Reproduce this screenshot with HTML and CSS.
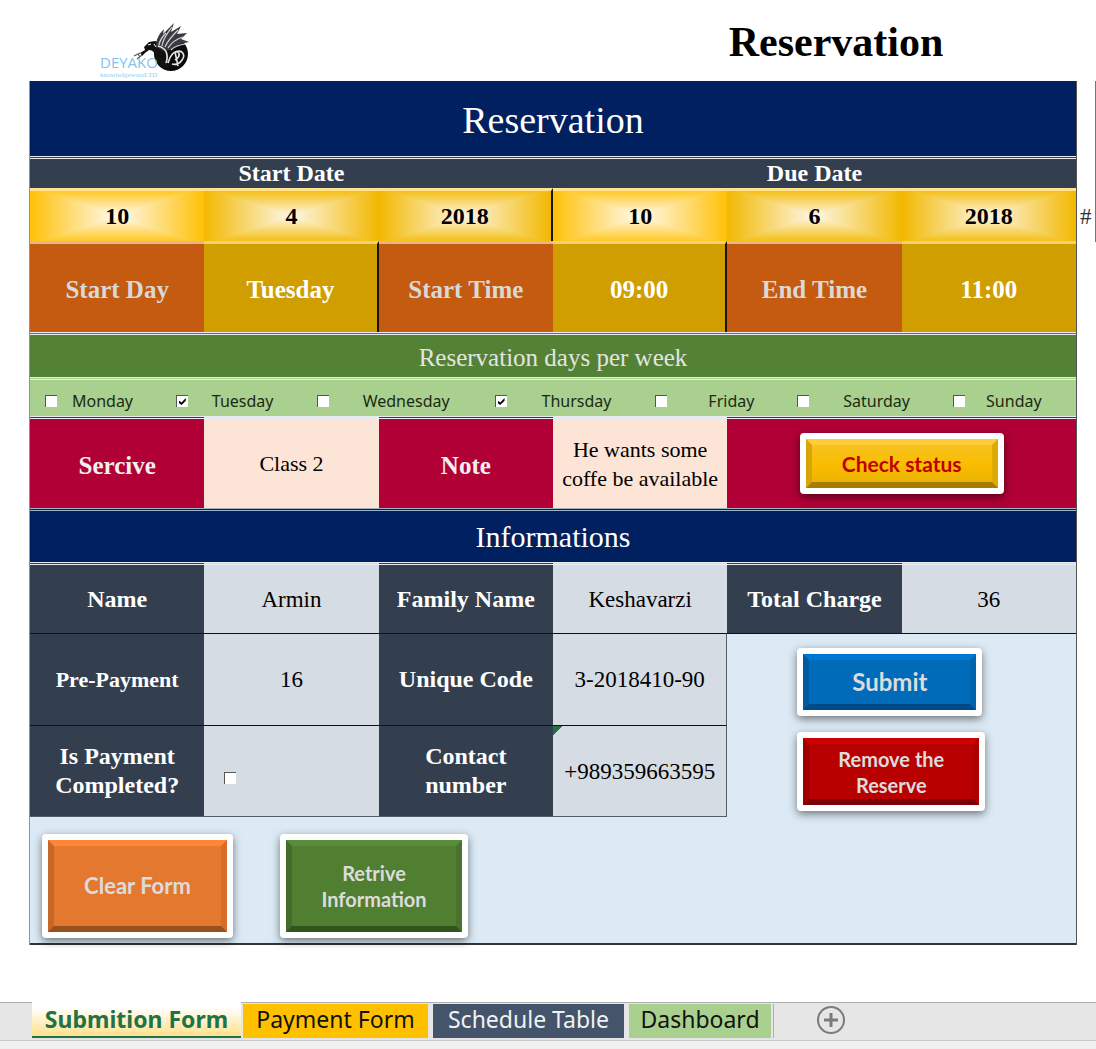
FILE: index.html
```html
<!DOCTYPE html>
<html lang="en">
<head>
<meta charset="utf-8">
<meta name="viewport" content="width=device-width, initial-scale=1">
<title>Reservation</title>
<link rel="stylesheet" href="styles.css">
</head>
<body>
<header class="top">
  <svg class="logo" viewBox="0 0 96 60" role="img" aria-label="Deyako knowledgeware LTD">
    <circle cx="73" cy="34" r="17" fill="#0b0b0d"/>
    <path fill="#111" d="M42 33l5-3-1-3 5-5 6-1 7 2 6 7 3 9-3 9c-7 1-12-4-13-11 0-4-2-7-6-7l-4 3-3 3-1-2z"/>
    <path fill="#3a3a40" d="M58 27c0-8 3-13 8-18l-1 5 11-11-3 9 10-6-4 8 10-1-6 6 8 3-9 2-9 6-7 1z"/>
    <path fill="none" stroke="#d4d4d8" stroke-width="1.2" d="M61 25c1-6 4-9 7-12M64 26c1-8 5-12 10-19M67 27c3-7 7-11 13-17M70 28c4-6 8-9 15-11M73 30c4-4 8-5 14-6"/>
    <path fill="none" stroke="#e6e6e8" stroke-width="1.6" d="M60 26c8 2 11 8 8 17M70 43c2-8 7-13 10-11 3 3 0 6-3 8M78 32c6-3 10 3 6 8-2 3-6 5-10 4M77 32l3 14"/>
    <path fill="none" stroke="#fff" stroke-width="1" d="M50 25l3-1M56 24l2 3"/>
    <path fill="none" stroke="#555" stroke-width="1.2" d="M36 36l6-3M39 39l5-4M40 34l2 3"/>
    <text class="logo-name" x="2" y="48">DEYAKO</text>
    <text class="logo-sub" x="2" y="57">knowledgewareLTD</text>
  </svg>
  <h1 class="page-title">Reservation</h1>
</header>

<main class="sheet">
  <table class="form">
    <colgroup><col><col><col><col><col><col></colgroup>
    <tbody>
      <tr class="r-title"><th colspan="6" class="navy big">Reservation</th></tr>
      <tr class="r-dates-head">
        <th colspan="3" class="slate rule">Start Date</th>
        <th colspan="3" class="slate rule">Due Date</th>
      </tr>
      <tr class="r-dates">
        <td class="glow">10</td><td class="glow deep">4</td><td class="glow deep divide">2018</td>
        <td class="glow">10</td><td class="glow deep">6</td><td class="glow deep">2018</td>
      </tr>
      <tr class="r-times">
        <th class="rust">Start Day</th><td class="gold divide">Tuesday</td>
        <th class="rust">Start Time</th><td class="gold divide">09:00</td>
        <th class="rust">End Time</th><td class="gold">11:00</td>
      </tr>
      <tr class="r-week-head"><th colspan="6" class="green rule">Reservation days per week</th></tr>
      <tr class="r-week">
        <td colspan="6" class="lime rule">
          <div class="days">
            <input type="checkbox" class="tick" id="mon"><label for="mon">Monday</label>
            <input type="checkbox" class="tick" id="tue" checked><label for="tue">Tuesday</label>
            <input type="checkbox" class="tick" id="wed"><label for="wed">Wednesday</label>
            <input type="checkbox" class="tick" id="thu" checked><label for="thu">Thursday</label>
            <input type="checkbox" class="tick" id="fri"><label for="fri">Friday</label>
            <input type="checkbox" class="tick" id="sat"><label for="sat">Saturday</label>
            <input type="checkbox" class="tick" id="sun"><label for="sun">Sunday</label>
          </div>
        </td>
      </tr>
      <tr class="r-service">
        <th class="crimson rule">Sercive</th><td class="peach rule">Class 2</td>
        <th class="crimson rule">Note</th><td class="peach rule">He wants some coffe be available</td>
        <td colspan="2" class="crimson rule">
          <button type="button" class="key key-check"><span class="face amber">Check status</span></button>
        </td>
      </tr>
      <tr class="r-info-head"><th colspan="6" class="navy rule steel info">Informations</th></tr>
      <tr class="r-name">
        <th class="slate rule">Name</th><td class="pale rule">Armin</td>
        <th class="slate rule">Family Name</th><td class="pale rule">Keshavarzi</td>
        <th class="slate rule">Total Charge</th><td class="pale rule">36</td>
      </tr>
      <tr class="r-pay">
        <th class="slate line small">Pre-Payment</th><td class="pale line">16</td>
        <th class="slate line">Unique Code</th><td class="pale line edge">3-2018410-90</td>
        <td colspan="2" rowspan="2" class="sky line">
          <div class="stack">
            <button type="button" class="key key-submit"><span class="face blue">Submit</span></button>
            <button type="button" class="key key-remove"><span class="face red">Remove the Reserve</span></button>
          </div>
        </td>
      </tr>
      <tr class="r-pay">
        <th class="slate line foot"><label for="paid">Is Payment Completed?</label></th>
        <td class="pale line foot paid"><input type="checkbox" class="tick" id="paid"></td>
        <th class="slate line foot">Contact<br>number</th>
        <td class="pale line foot edge flagged">+989359663595</td>
      </tr>
      <tr class="r-actions">
        <td colspan="6" class="sky end">
          <div class="actions">
            <button type="button" class="key key-clear"><span class="face orange">Clear Form</span></button>
            <button type="button" class="key key-retrieve"><span class="face leaf">Retrive Information</span></button>
          </div>
        </td>
      </tr>
    </tbody>
  </table>
  <aside class="next-col">#</aside>
</main>

<nav class="tabs" aria-label="Sheets">
  <button type="button" class="tab tab-active">Submition Form</button>
  <button type="button" class="tab tab-payment">Payment Form</button>
  <button type="button" class="tab tab-schedule">Schedule Table</button>
  <button type="button" class="tab tab-dashboard">Dashboard</button>
  <button type="button" class="add" aria-label="New sheet">
    <svg viewBox="0 0 30 30" width="30" height="30"><circle cx="15" cy="15" r="13" fill="none" stroke="#7b7b7b" stroke-width="2"/><path d="M15 8v14M8 15h14" stroke="#7b7b7b" stroke-width="3"/></svg>
  </button>
</nav>
<footer class="status"></footer>
</body>
</html>
```
FILE: styles.css
```css
* { box-sizing: border-box; }

body {
  margin: 0;
  min-height: 100vh;
  display: flex;
  flex-direction: column;
  background: #fff;
  color: #000;
  font-family: "Liberation Serif", serif;
}

button { font: inherit; border: 0; padding: 0; cursor: pointer; }

/* Header */
.top {
  display: grid;
  grid-template-columns: 576px 1fr;
  height: 81px;
}
.logo { width: 96px; height: 60px; margin: 20px 0 0 98px; }
.logo-name { font: 15px "Open Sans", sans-serif; fill: #7fc4ec; }
.logo-sub { font: 7px "Liberation Serif", serif; fill: #8fcdf0; }
.page-title {
  margin: 0;
  text-align: center;
  font-size: 42px;
  line-height: 84px;
}

/* Form table */
.sheet { display: flex; align-items: flex-start; padding-left: 29px; }
.form {
  flex: 1;
  width: 100%;
  table-layout: fixed;
  border-spacing: 0;
  border-left: 1px solid #8c929c;
  border-right: 1px solid #555;
}
.form th, .form td {
  padding: 0;
  text-align: center;
  vertical-align: middle;
  font-size: 24px;
  line-height: 29px;
}
.form td { font-size: 23px; }

.form .r-title th { height: 75px; }
.form .r-dates-head th { height: 32px; }
.form .r-dates td { height: 53px; }
.form .r-times > * { height: 91px; }
.form .r-week-head th { height: 45px; }
.form .r-week td { height: 39px; }
.form .r-service > * { height: 92px; }
.form .r-info-head th { height: 54px; }
.form .r-name > * { height: 71px; }
.form .r-pay > * { height: 92px; }
.form .r-actions td { height: 128px; }

.rule { border-top: 3px double #e8ecf0; }
.steel { border-top-color: #9fb3c8; }
.line { border-top: 1px solid #111; }
.foot { border-bottom: 1px solid #555b63; }
.edge { border-right: 1px solid #555b63; }
.end { border-bottom: 2px solid #33333b; }
.divide { border-right: 2px solid #1c1400; }

.navy { background: #00205f; color: #fff; }
.slate { background: #333f4f; color: #fff; }
.rust { background: #c55a11; color: #d9d9d9; border-top: 3px solid #e6b58c; }
.gold { background: #d09e00; color: #fff; border-top: 3px solid #efd372; }
.green { background: #548235; color: #e4e4e4; }
.lime { background: #a9d08e; color: #1c2a14; }
.crimson { background: #b00035; color: #f0f0f0; }
.peach { background: #fce4d6; }
.pale { background: #d6dce4; }
.sky { background: #dceaf5; }

.form .big { padding-top: 3px; font-size: 38px; font-weight: 400; line-height: 44px; }
.form .info { font-size: 30px; font-weight: 400; }
.form .green { padding-top: 2px; font-size: 25px; font-weight: 400; }
.form .small { font-size: 22px; }
.form .rust, .form .gold { padding-top: 3px; font-size: 25px; font-weight: 700; }
.form th.crimson { padding-top: 3px; font-size: 25px; }
.form .peach { font-size: 22px; }

/* Taking the darker of the two gradients leaves a rectangular glow */
.form .glow {
  font-size: 24px;
  font-weight: 700;
  border-top: 3px solid #ffe28c;
  background-image:
    linear-gradient(to right, #ffc107, #fffaf0 50%, #ffc107),
    linear-gradient(to bottom, #ffc926, #fffaf0 50%, #ffc926);
  background-blend-mode: darken;
}
.form .deep {
  background-image:
    linear-gradient(to right, #f2b800, #fdf7e8 50%, #f2b800),
    linear-gradient(to bottom, #f4bf16, #fdf7e8 50%, #f4bf16);
}

/* Tick boxes */
.tick {
  appearance: none;
  width: 12px;
  height: 12px;
  margin: 0;
  background: #fff;
  border: solid #555;
  border-width: 1px 0 0 1px;
  display: grid;
  place-items: center;
}
.tick:checked::before {
  content: "";
  width: 7px;
  height: 7px;
  background: #000;
  clip-path: polygon(0 35%, 38% 65%, 100% 0, 100% 40%, 38% 100%, 0 70%);
}
.days {
  display: grid;
  grid-template-columns: 27fr 104fr 36fr 105fr 46fr 132fr 47fr 114fr 53fr 89fr 46fr 110fr 33fr 90fr;
  align-items: center;
  justify-items: start;
  padding: 6px 0 0 15px;
  font-family: "Noto Sans", sans-serif;
  font-size: 16px;
}
.days label { line-height: 24px; }
.paid .tick { margin: 14px 0 0 20px; }
.flagged {
  background-image: linear-gradient(135deg, #217346 7px, transparent 7px);
}

/* Bevelled buttons */
.key {
  display: inline-flex;
  padding: 6px;
  background: #fff;
  border-radius: 4px;
  box-shadow: 0 3px 8px rgba(0, 0, 0, .5);
  vertical-align: middle;
}
.face {
  flex: 1;
  align-self: stretch;
  display: flex;
  align-items: center;
  justify-content: center;
  border: 6px solid;
  padding: 0 12px;
  font: 700 20px/26px Lato, "Open Sans", sans-serif;
  color: #dcdcdc;
}
.amber { background: linear-gradient(#f5c222, #fabd00 50%, #ebb300); border-color: #ffcd38 #dfaa00 #a67c00 #d8a508; color: #c00000; font-size: 21px; }
.blue { background: #006bb9; border-color: #0078d2 #0064ae #004b87 #005ca0; font-size: 24px; }
.red { background: #b80000; border-color: #ce0000 #ac0000 #7e0008 #9e0000; }
.orange { background: #e5782f; border-color: #ff8634 #d66d28 #97501f #c66728; font-size: 22px; }
.leaf { background: #507f32; border-color: #5a8d39 #48722d #34541f #446d2b; }

.key-check { width: 204px; height: 61px; }
.key-submit { width: 185px; height: 68px; }
.key-remove { width: 188px; height: 79px; }
.key-clear { width: 191px; height: 104px; }
.key-retrieve { width: 188px; height: 104px; }

.stack {
  display: flex;
  flex-direction: column;
  align-items: flex-start;
  gap: 16px;
  padding: 8px 0 0 70px;
}
.actions { display: flex; gap: 47px; padding: 12px 0 0 12px; }

.next-col {
  flex: none;
  width: 19px;
  height: 161px;
  padding: 121px 0 0 3px;
  border-right: 1px solid #777;
  font-size: 23px;
  line-height: 29px;
  color: #333;
}

/* Sheet tabs */
.tabs {
  display: flex;
  align-items: flex-start;
  height: 39px;
  margin-top: 57px;
  padding-left: 32px;
  background: #e6e6e6;
  border-top: 1px solid #b0b0b0;
  border-bottom: 1px solid #c8c8c8;
}
.tab {
  height: 34px;
  margin-top: 1px;
  margin-right: 5px;
  padding: 0 0 4px;
  font: 23px/30px "Noto Sans", sans-serif;
  white-space: nowrap;
}
.tab-active {
  width: 209px;
  height: 36px;
  margin: -1px 2px 0 0;
  padding: 0;
  background: linear-gradient(#fff 15%, #ffe08c);
  border-bottom: 2px solid #217346;
  color: #217346;
  font-weight: 700;
}
.tab-payment { width: 185px; background: #ffc000; color: #111; }
.tab-schedule { width: 191px; background: #44546a; color: #f2f2f2; }
.tab-dashboard { width: 142px; background: #a9d08e; color: #111; box-shadow: 2px 0 #e6e6e6, 3px 0 #b0b0b0; }
.add { margin: 2px 0 0 40px; width: 30px; height: 30px; background: none; }
.add svg { display: block; }
.status { flex: 1; background: #f0f0f0; }
```
